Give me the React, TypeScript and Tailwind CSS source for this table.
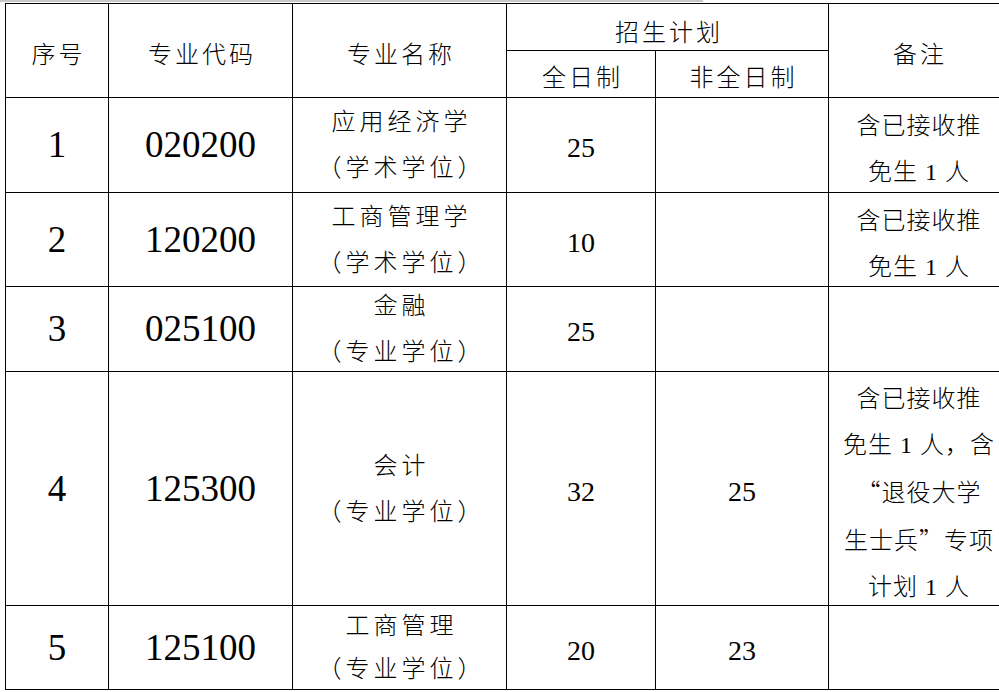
import React from 'react'

// 招生计划表 — 复刻截图
const SERIF_CJK = '[font-family:Liberation_Serif,Noto_Sans_CJK_SC,serif]'
const SERIF = '[font-family:Liberation_Serif,serif]'

type Row = {
  no: string
  code: string
  name: string
  type: string
  full: string
  part: string
  note: React.ReactNode[]
  nameLeading?: string
}

const Q = ({ children }: { children: React.ReactNode }) => (
  <span className="[font-family:Noto_Sans_CJK_SC,sans-serif] [font-feature-settings:'fwid']">{children}</span>
)

const ROWS: Row[] = [
  { no: '1', code: '020200', name: '应用经济学', type: '（学术学位）', full: '25', part: '', note: ['含已接收推', '免生 1 人'] },
  { no: '2', code: '120200', name: '工商管理学', type: '（学术学位）', full: '10', part: '', note: ['含已接收推', '免生 1 人'] },
  { no: '3', code: '025100', name: '金融', type: '（专业学位）', full: '25', part: '', note: [] },
  {
    no: '4', code: '125300', name: '会计', type: '（专业学位）', full: '32', part: '25',
    note: [
      '含已接收推',
      '免生 1 人，含',
      <><Q>“</Q>退役大学</>,
      <>生士兵<Q>”</Q>专项</>,
      '计划 1 人',
    ],
  },
  { no: '5', code: '125100', name: '工商管理', type: '（专业学位）', full: '20', part: '23', note: [], nameLeading: 'leading-[43px]' },
]

function Cell({ className = '', children }: { className?: string; children?: React.ReactNode }) {
  return (
    <div className={`flex flex-col items-center justify-center border-r border-b border-black text-black ${className}`}>
      {children}
    </div>
  )
}

export default function App() {
  const head = `${SERIF_CJK} text-[24px] tracking-[3px] pl-[3px] font-light`
  return (
    <div className="w-[999px] h-[692px] overflow-hidden bg-white">
      <div className="h-[2px] w-[703px] bg-[#c8c8c8]" />
      <div className="ml-[5px] mt-px grid w-max grid-cols-[103px_184px_214px_149px_173px_180px] grid-rows-[47px_47px_95px_94px_85px_234px_84px] border-l border-t border-black">
        {/* 表头 */}
        <Cell className={`row-span-2 pt-[8px] ${head}`}>序号</Cell>
        <Cell className={`row-span-2 pt-[8px] ${head}`}>专业代码</Cell>
        <Cell className={`row-span-2 pt-[8px] ${head}`}>专业名称</Cell>
        <Cell className={`col-span-2 pt-[12px] ${head}`}>招生计划</Cell>
        <Cell className={`row-span-2 pt-[8px] ${head}`}>备注</Cell>
        <Cell className={`pt-[8px] ${head}`}>全日制</Cell>
        <Cell className={`pt-[8px] ${head}`}>非全日制</Cell>

        {ROWS.map((r) => (
          <React.Fragment key={r.no}>
            <Cell className={`${SERIF} text-[37px]`}>{r.no}</Cell>
            <Cell className={`${SERIF} text-[37px]`}>{r.code}</Cell>
            <Cell className={`${SERIF_CJK} text-[24px] tracking-[4px] pl-[4px] font-light ${r.nameLeading ?? 'leading-[46px]'}`}>
              <span>{r.name}</span>
              <span>{r.type}</span>
            </Cell>
            <Cell className={`${SERIF} text-[28px] pt-[6px]`}>{r.full}</Cell>
            <Cell className={`${SERIF} text-[28px] pt-[6px]`}>{r.part}</Cell>
            <Cell className={`${SERIF_CJK} text-[24px] tracking-[1px] pl-[1px] leading-[46px] pt-[8px] font-light`}>
              {r.note.map((line, i) => (
                <span key={i} className="whitespace-nowrap">{line}</span>
              ))}
            </Cell>
          </React.Fragment>
        ))}
      </div>
    </div>
  )
}
